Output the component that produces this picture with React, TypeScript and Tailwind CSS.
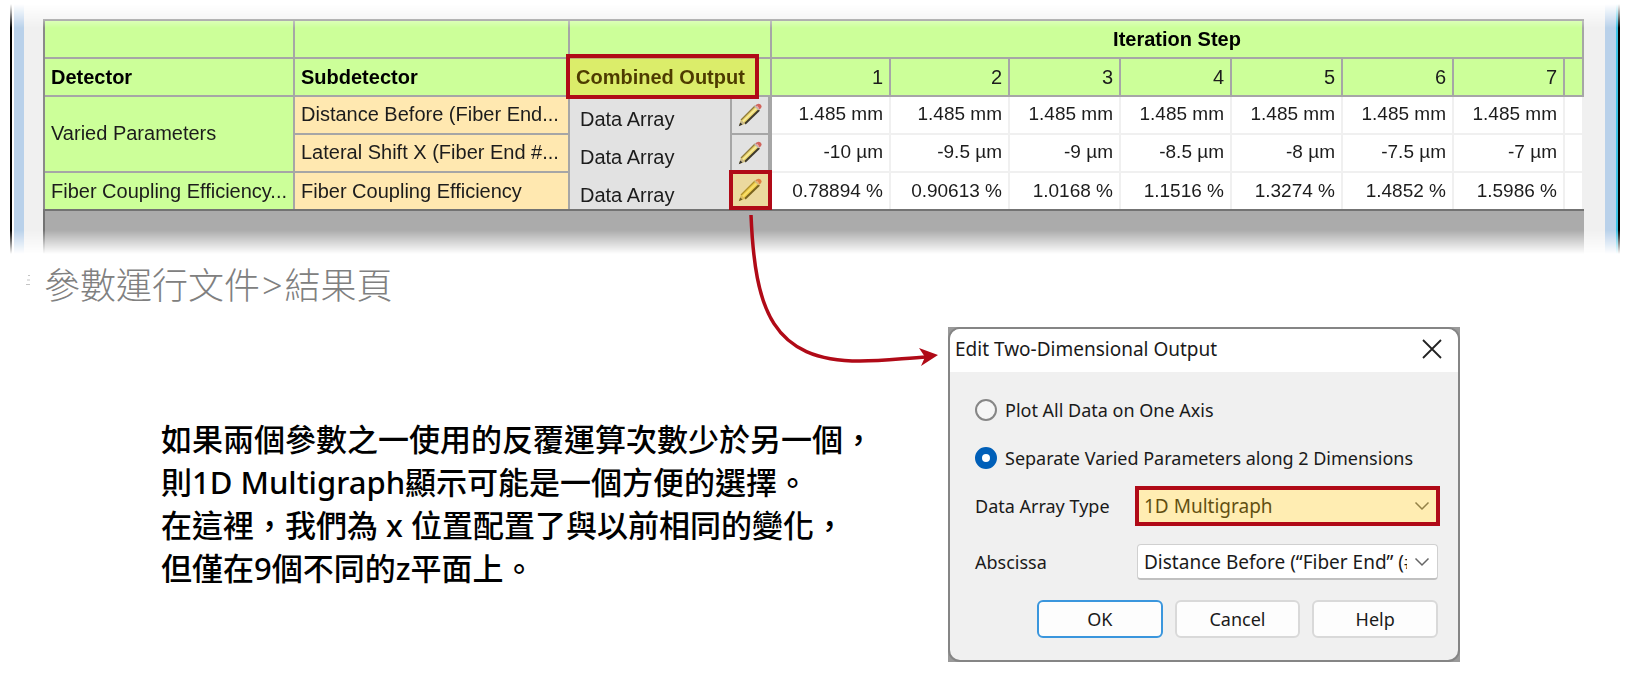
import { useState } from 'react';

const steps = [
  { step: 1, distance: '1.485 mm', shift: '-10 µm', efficiency: '0.78894 %' },
  { step: 2, distance: '1.485 mm', shift: '-9.5 µm', efficiency: '0.90613 %' },
  { step: 3, distance: '1.485 mm', shift: '-9 µm', efficiency: '1.0168 %' },
  { step: 4, distance: '1.485 mm', shift: '-8.5 µm', efficiency: '1.1516 %' },
  { step: 5, distance: '1.485 mm', shift: '-8 µm', efficiency: '1.3274 %' },
  { step: 6, distance: '1.485 mm', shift: '-7.5 µm', efficiency: '1.4852 %' },
  { step: 7, distance: '1.485 mm', shift: '-7 µm', efficiency: '1.5986 %' },
];

const head = 'h-[38px] border-r-2 border-b-2 border-[#a6a6a6] bg-[#ccff99]';
const name =
  'border-r-2 border-[#a6a6a6] pl-1.5 text-left font-normal whitespace-nowrap overflow-hidden';
const value = 'border-r-2 border-[#f0f0f0] bg-white pr-1.5 text-right text-[19px]';
const inner = 'h-[38px] border-b-2 pb-0.5';
const last = 'h-9';

const Pencil = () => (
  <svg viewBox="0 0 24 24" className="w-6 h-6" fill="none">
    <path d="M1 23 L3 16.6 L17 2.8 L21.2 7 L7.4 20.8 Z" fill="#e9d36b" />
    <path d="M3 17 L17 3" stroke="#8d7a3c" strokeWidth="1.2" />
    <path d="M5 18.5 L19 5" stroke="#f7eda0" strokeWidth="1.6" />
    <path d="M7 20.8 L21.2 7" stroke="#3f3a2c" strokeWidth="2" />
    <path d="M16.2 3.5 L18.4 1.3 L22 5.6 L20.4 7.2 Z" fill="#b9b9b9" />
    <path d="M17.5 2.6 Q20 -0.4 22.6 1.6 Q25 4 21.6 6.6 Z" fill="#d2635b" />
    <path d="M18.6 3 L21 5.6" stroke="#eab0a8" strokeWidth="1.2" />
    <path d="M3 17 L7 20.5 L1 23 Z" fill="#c9b98c" />
    <path d="M2.2 19.4 L4.6 21.6 L0.8 23.2 Z" fill="#333" />
  </svg>
);

const Highlight = (props: { className: string }) => (
  <span
    className={`absolute border-4 border-[#b00a17] bg-[rgba(255,195,0,0.3)] pointer-events-none z-10 ${props.className}`}
  />
);

const OutputCell = (props: { marked?: boolean }) => (
  <td className="p-0 border-r-2 border-[#a6a6a6] bg-[#e2e2e2]">
    <div className={`relative flex ${props.marked ? 'h-9' : 'h-[38px]'}`}>
      <span className="flex-1 pl-2.5 pt-2.5">Data Array</span>
      <button
        aria-label="Edit output"
        className="w-10 flex justify-center items-center border-2 border-t-0 border-[#a6a6a6] bg-[#e2e2e2]"
      >
        <Pencil />
      </button>
      {props.marked ? <Highlight className="-right-0.5 -top-[3px] w-[43px] h-10" /> : <></>}
    </div>
  </td>
);

const ResultsTable = () => (
  <table className="w-full table-fixed border-separate border-spacing-0 border-t-2 border-l-2 border-[#8a8a8a] text-[20px] leading-6 text-[#1c1c1c]">
    <colgroup>
      <col className="w-[250px]" />
      <col className="w-[275px]" />
      <col className="w-[202px]" />
      <col className="w-[119px]" />
      <col className="w-[119px]" />
      <col className="w-[111px]" />
      <col className="w-[111px]" />
      <col className="w-[111px]" />
      <col className="w-[111px]" />
      <col className="w-[111px]" />
      <col />
    </colgroup>
    <thead>
      <tr>
        <td className={head}></td>
        <td className={head}></td>
        <td className={head}></td>
        <th colSpan={8} className={`${head} border-r-0 text-center text-black`}>
          Iteration Step
        </th>
      </tr>
      <tr>
        <th className={`${head} px-1.5 text-left text-black`}>Detector</th>
        <th className={`${head} px-1.5 text-left text-black`}>Subdetector</th>
        <th className={`${head} relative px-1.5 text-left text-black`}>
          Combined Output
          <Highlight className="-left-1 -top-[5px] w-[193px] h-[45px]" />
        </th>
        {steps.map((s) => (
          <th key={s.step} className={`${head} pr-1.5 text-right font-normal`}>
            {s.step}
          </th>
        ))}
        <td className={`${head} border-r-0`}></td>
      </tr>
    </thead>
    <tbody>
      <tr>
        <th rowSpan={2} className={`${name} ${inner} bg-[#ccff99]`}>
          Varied Parameters
        </th>
        <th className={`${name} ${inner} bg-[#ffe8b0]`}>Distance Before (Fiber End...</th>
        <OutputCell />
        {steps.map((s) => (
          <td key={s.step} className={`${value} ${inner}`}>{s.distance}</td>
        ))}
        <td className={`${value} ${inner} border-r-0`}></td>
      </tr>
      <tr>
        <th className={`${name} ${inner} bg-[#ffe8b0]`}>Lateral Shift X (Fiber End #...</th>
        <OutputCell />
        {steps.map((s) => (
          <td key={s.step} className={`${value} ${inner}`}>{s.shift}</td>
        ))}
        <td className={`${value} ${inner} border-r-0`}></td>
      </tr>
      <tr>
        <th className={`${name} ${last} bg-[#ccff99]`}>Fiber Coupling Efficiency...</th>
        <th className={`${name} ${last} bg-[#ffe8b0]`}>Fiber Coupling Efficiency</th>
        <OutputCell marked />
        {steps.map((s) => (
          <td key={s.step} className={`${value} ${last}`}>{s.efficiency}</td>
        ))}
        <td className={`${value} ${last} border-r-0`}></td>
      </tr>
    </tbody>
  </table>
);

const ResultsWindow = () => (
  <div className="ml-2.5 mr-[13px] flex h-[250px] [mask-image:linear-gradient(to_bottom,transparent,black_24px,black_226px,transparent)]">
    <div className="w-0.5 bg-black"></div>
    <div className="ml-0.5 w-2.5 bg-[#b9d1ea]"></div>
    <div className="flex-1 min-w-0 bg-[#f0f0f0] pl-[19px] pr-[21px] pt-[15px]">
      <div className="h-full bg-[#ababab]">
        <ResultsTable />
        <div className="h-11 border-l-2 border-t-2 border-[#737373]"></div>
      </div>
    </div>
    <div className="w-[11px] bg-[#b9d1ea]"></div>
    <div className="w-0.5 bg-[#3cc3e6]"></div>
    <div className="w-0.5 bg-black"></div>
  </div>
);

const Chevron = () => (
  <svg
    viewBox="0 0 16 10"
    className="absolute right-2 top-1/2 w-4 h-2.5 -translate-y-1/2 pointer-events-none"
  >
    <path d="M1.5 1.5 L8 8 L14.5 1.5" fill="none" stroke="#666" strokeWidth="1.5" />
  </svg>
);

const OutputDialog = () => {
  const [mode, setMode] = useState<string>('separate');
  const radio =
    'appearance-none w-[22px] h-[22px] rounded-full border-2 border-[#868686] bg-[#f5f5f5] checked:border-[7px] checked:border-[#005fb8] checked:bg-white';
  const select =
    'appearance-none w-full h-9 pl-1.5 pr-[30px] rounded-sm border border-[#d0d0d0] border-b-2 border-b-[#c0c0c0] bg-white text-[19px] overflow-hidden';
  const button = 'flex-1 h-[38px] rounded-md bg-[#fdfdfd] text-center';

  return (
    <div className="w-[512px] h-[335px] shrink-0 bg-[#9a9a9a]">
      <div
        role="dialog"
        aria-labelledby="dialog-title"
        className="h-full flex flex-col rounded-xl border-2 border-[#858585] bg-[#f0f0f0] overflow-hidden font-['Noto_Sans','Open_Sans',sans-serif] text-[18px] leading-6 text-[#1a1a1a]"
      >
        <div className="h-[43px] shrink-0 flex justify-between items-center bg-white pl-[5px] pr-4 pb-1">
          <h2 id="dialog-title" className="text-[19px]">
            Edit Two-Dimensional Output
          </h2>
          <button aria-label="Close">
            <svg viewBox="0 0 20 20" className="w-5 h-5">
              <path d="M1 1 L19 19 M19 1 L1 19" stroke="#222" strokeWidth="1.8" />
            </svg>
          </button>
        </div>
        <div className="flex flex-col px-5 pl-[25px]">
          <label className="mt-[26px] flex items-center gap-2">
            <input
              type="radio"
              name="mode"
              className={radio}
              checked={mode === 'all'}
              onChange={() => setMode('all')}
            />
            Plot All Data on One Axis
          </label>
          <label className="mt-6 flex items-center gap-2">
            <input
              type="radio"
              name="mode"
              className={radio}
              checked={mode === 'separate'}
              onChange={() => setMode('separate')}
            />
            Separate Varied Parameters along 2 Dimensions
          </label>
          <div className="mt-[18px] flex items-center">
            <label htmlFor="array-type" className="w-[162px]">
              Data Array Type
            </label>
            <div className="relative flex-1">
              <select id="array-type" className={select}>
                <option>1D Multigraph</option>
              </select>
              <Chevron />
              <Highlight className="-inset-0.5" />
            </div>
          </div>
          <div className="mt-5 flex items-center">
            <label htmlFor="abscissa" className="w-[162px]">
              Abscissa
            </label>
            <div className="relative flex-1 min-w-0">
              <select id="abscissa" className={select}>
                <option>Distance Before (“Fiber End” (#</option>
              </select>
              <Chevron />
            </div>
          </div>
          <div className="mt-5 ml-[62px] flex gap-3">
            <button className={`${button} border-2 border-[#3a96dd]`}>OK</button>
            <button className={`${button} border-2 border-[#d9d9d9]`}>Cancel</button>
            <button className={`${button} border-2 border-[#d9d9d9]`}>Help</button>
          </div>
        </div>
      </div>
    </div>
  );
};

const App = () => {
  return (
    <main className="relative bg-white pt-1 pb-3 font-['Liberation_Sans',Arial,sans-serif]">
      <ResultsWindow />
      <section className="flex justify-between pr-[173px]">
        <div lang="zh-Hant" className="font-['Noto_Sans','Noto_Sans_CJK_TC',sans-serif]">
          <div className="flex items-start pl-[26px] pt-2.5">
            <svg viewBox="0 0 4 12" className="mt-2.5 w-1 h-3">
              <path d="M2 1.5 H4 M1 6 H4 M0 10.5 H4" stroke="#c4c4c4" />
            </svg>
            <h1 className="pl-3.5 text-[36px] leading-[44px] font-light text-[#808080]">
              參數運行文件<span className="mx-0.5">&gt;</span>結果頁
            </h1>
          </div>
          <p className="mt-[110px] pl-[161px] text-[31px] leading-[43px] font-medium text-black whitespace-nowrap">
            如果兩個參數之一使用的反覆運算次數少於另一個，
            <br />
            則1D Multigraph顯示可能是一個方便的選擇。
            <br />
            在這裡，我們為 x 位置配置了與以前相同的變化，
            <br />
            但僅在9個不同的z平面上。
          </p>
        </div>
        <div className="pt-[73px]">
          <OutputDialog />
        </div>
      </section>
      <svg
        viewBox="0 0 200 160"
        className="absolute left-[740px] top-[210px] w-[200px] h-40 pointer-events-none"
      >
        <path
          d="M11 5 C15 100 32 151 120 151 C145 151 165 148 187 147"
          fill="none"
          stroke="#b00a17"
          strokeWidth="3.5"
        />
        <path d="M198 145 L179 138 L185 147 L181 156 Z" fill="#b00a17" />
      </svg>
    </main>
  );
};

export default App;
